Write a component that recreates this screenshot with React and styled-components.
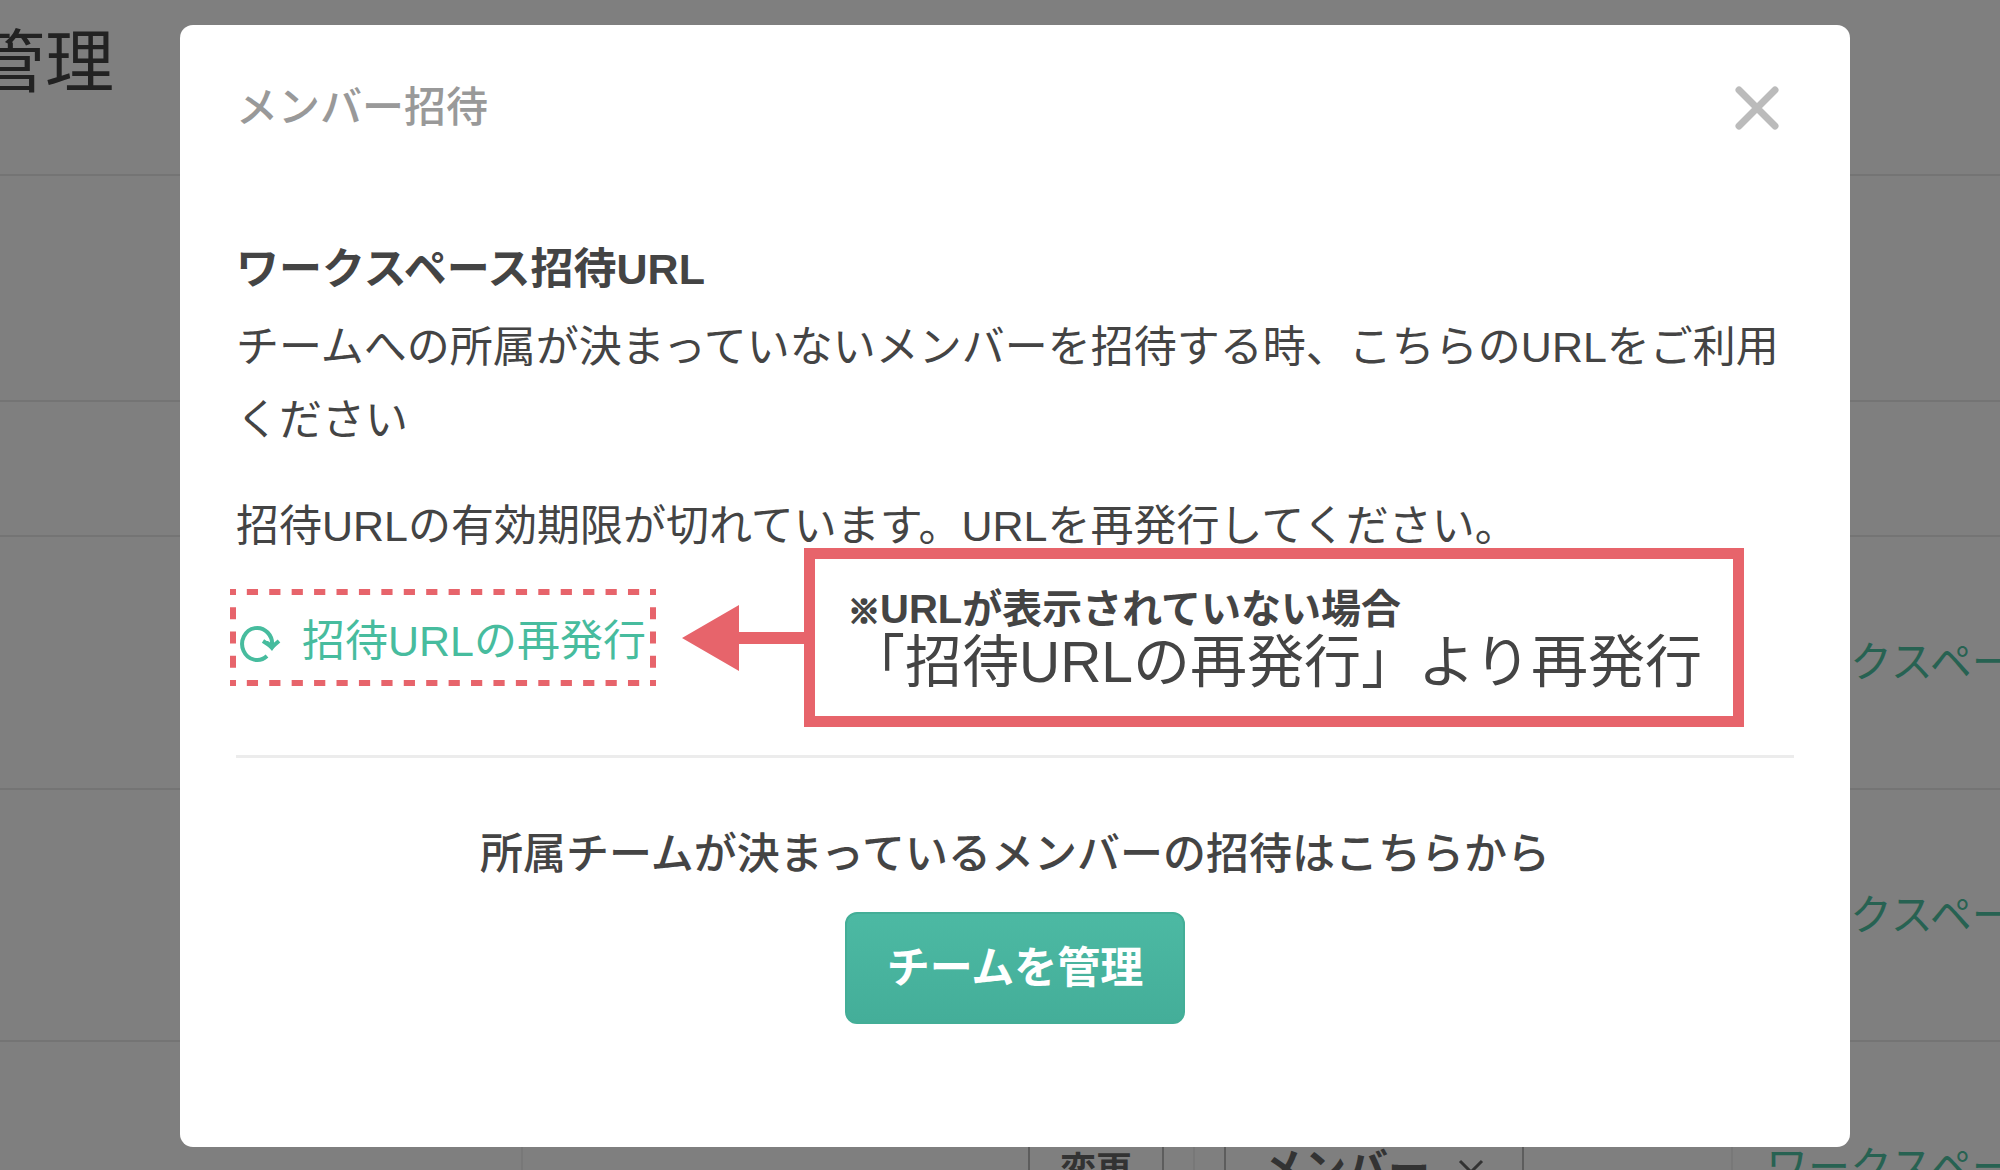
import React from 'react';
import styled, { createGlobalStyle } from 'styled-components';

const GlobalStyle = createGlobalStyle`
  * {
    box-sizing: border-box;
  }
  body {
    margin: 0;
    background: #fff;
    color: #444;
    font-family: "Liberation Sans", "Noto Sans CJK JP", sans-serif;
  }
  button, select {
    font-family: inherit;
  }
`;

const Page = styled.main`
  height: 100vh;
  overflow: hidden;
`;
const PageHeader = styled.header`
  height: 176px;
  padding-top: 16px;
  border-bottom: 2px solid #e8e8e8;
`;
const PageTitle = styled.h1`
  margin: 0 0 0 -24px;
  font-size: 69px;
  font-weight: 400;
  line-height: 96px;
`;
const Section = styled.section`
  height: ${props => props.$tall ? '226px' : '135px'};
  border-bottom: 2px solid #e8e8e8;
`;
const Members = styled.table`
  width: 100%;
  table-layout: fixed;
  border-collapse: collapse;
`;
const Col = styled.col`
  width: ${props => props.$width};
`;
const Cell = styled.td`
  height: 252px;
  padding: 0 29px;
  border-bottom: 2px solid #e8e8e8;
  border-right: 2px solid #f0f0f0;
  text-align: ${props => props.$align || 'left'};
  white-space: nowrap;
  overflow: hidden;
  &:last-child {
    padding-bottom: 8px;
    border-right: none;
  }
`;
const TeamLink = styled.a`
  padding-left: 4px;
  color: #4fc5a5;
  font-size: 42px;
  text-decoration: none;
`;
const ChangeButton = styled.button`
  height: 88px;
  padding: 0 30px;
  border: 2px solid #bbb;
  background: #fff;
  color: #666;
  font-size: 36px;
  font-weight: 700;
`;
const SelectBox = styled.span`
  display: inline-grid;
  align-items: center;
  width: 300px;
  & > * {
    grid-area: 1 / 1;
  }
  & > svg {
    justify-self: end;
    margin-right: 40px;
  }
`;
const RoleSelect = styled.select`
  appearance: none;
  width: 100%;
  height: 88px;
  padding: 4px 36px 0;
  border: 2px solid #bbb;
  border-radius: 0;
  background: #fff;
  color: #666;
  font-size: 42px;
  font-weight: 700;
`;

const Overlay = styled.div`
  position: fixed;
  inset: 0;
  padding: 25px 150px 0 180px;
  background: rgba(0, 0, 0, 0.5);
`;
const Modal = styled.div`
  padding: 46px 56px 123px;
  border-radius: 13px;
  background: #fff;
`;
const ModalHeader = styled.div`
  display: flex;
  align-items: center;
  justify-content: space-between;
  height: 73px;
  margin-bottom: 89px;
  padding-right: 15px;
`;
const ModalTitle = styled.h2`
  margin: 0;
  color: #999;
  font-size: 42px;
  font-weight: 500;
  line-height: 73px;
`;
const CloseButton = styled.button`
  display: flex;
  padding: 0;
  border: none;
  background: none;
`;
const Heading = styled.h3`
  margin: 0 0 ${props => props.$center ? '0' : '5px'};
  font-size: 43px;
  font-weight: ${props => props.$center ? 500 : 700};
  line-height: 73px;
  text-align: ${props => props.$center ? 'center' : 'left'};
`;
const Text = styled.p`
  margin: 0 0 ${props => props.$gap ? '33px' : '0'};
  font-size: 43px;
  line-height: 73px;
`;
const ReissueRow = styled.div`
  display: flex;
  align-items: center;
  margin: -15px 0 28px -6px;
`;
const Highlight = styled.div`
  display: grid;
  flex: none;
  width: 426px;
  height: 97px;
  & > * {
    grid-area: 1 / 1;
  }
`;
const ReissueButton = styled.button`
  display: flex;
  align-items: center;
  gap: 20px;
  padding: 8px 0 0 8px;
  border: none;
  background: none;
  color: #47bc9e;
  font-size: 43px;
  line-height: 73px;
  white-space: nowrap;
`;
const Arrow = styled.svg`
  flex: none;
  margin-left: 26px;
`;
const Callout = styled.div`
  height: 179px;
  width: 940px;
  flex: none;
  padding: 24px 33px;
  border: 11px solid #e7646b;
  background: #fff;
  white-space: nowrap;
`;
const CalloutLead = styled.strong`
  display: block;
  font-size: 40px;
  line-height: 52px;
`;
const Mark = styled.span`
  font-size: 32px;
  -webkit-text-stroke: 2px currentColor;
`;
const CalloutText = styled.span`
  display: block;
  font-size: 57px;
  line-height: 48px;
`;
const Divider = styled.hr`
  height: 3px;
  margin: 0 0 60px;
  border: none;
  background: #ececec;
`;
const TeamButton = styled.button`
  display: block;
  height: 112px;
  margin: 21px auto 0;
  padding: 0 40px 8px;
  border: 2px solid #43ae97;
  border-radius: 12px;
  background: linear-gradient(#4cb9a3, #44ae99);
  color: #fff;
  font-size: 43px;
  font-weight: 700;
`;

const CloseIcon = () => (
  <svg width="44" height="44" viewBox="0 0 44 44" stroke="#bbb" strokeWidth="7" strokeLinecap="round">
    <path d="M4 4L40 40M40 4L4 40" />
  </svg>
);

const ReloadIcon = () => (
  <svg width="44" height="44" viewBox="0 0 44 44" fill="none" stroke="currentColor" strokeWidth="4">
    <path d="M29 36A15 16 0 1 1 34 26" />
    <path d="M25 21L34 27L41 21" />
    <path d="M25 21H30L34 24L41 21L34 31Z" fill="currentColor" stroke="none" />
  </svg>
);

// every side starts and ends on half a dash
const DashedFrame = () => (
  <svg width="426" height="97" fill="none" stroke="#e7646b" strokeWidth="6" strokeDasharray="2 2" strokeDashoffset="1" pointerEvents="none">
    <path d="M0 3H426" pathLength="76" />
    <path d="M0 94H426" pathLength="76" />
    <path d="M3 0V97" pathLength="16" />
    <path d="M423 0V97" pathLength="16" />
  </svg>
);

const rows = [1, 2, 3];

function App() {
  return (
    <>
      <GlobalStyle />
      <Page>
        <PageHeader><PageTitle>管理</PageTitle></PageHeader>
        <Section $tall />
        <Section />
        <Members>
          <colgroup>
            <Col $width="26.1%" />
            <Col $width="33.6%" />
            <Col $width="26.9%" />
            <Col />
          </colgroup>
          <tbody>
            {rows.map(row => (
              <tr key={row}>
                <Cell />
                <Cell $align="right"><ChangeButton>変更</ChangeButton></Cell>
                <Cell>
                  <SelectBox>
                    <RoleSelect aria-label="権限"><option>メンバー</option></RoleSelect>
                    <svg width="26" height="16" viewBox="0 0 26 16" fill="none" stroke="#666" strokeWidth="3"><path d="M2 2L13 13L24 2" /></svg>
                  </SelectBox>
                </Cell>
                <Cell><TeamLink href="#">ワークスペース</TeamLink></Cell>
              </tr>
            ))}
          </tbody>
        </Members>
      </Page>
      <Overlay>
        <Modal role="dialog" aria-labelledby="modal-title">
          <ModalHeader>
            <ModalTitle id="modal-title">メンバー招待</ModalTitle>
            <CloseButton aria-label="閉じる"><CloseIcon /></CloseButton>
          </ModalHeader>
          <Heading>ワークスペース招待URL</Heading>
          <Text $gap>チームへの所属が決まっていないメンバーを招待する時、こちらのURLをご利用ください</Text>
          <Text>招待URLの有効期限が切れています。URLを再発行してください。</Text>
          <ReissueRow>
            <Highlight>
              <ReissueButton><ReloadIcon />招待URLの再発行</ReissueButton>
              <DashedFrame />
            </Highlight>
            <Arrow width="122" height="66" viewBox="0 0 122 66" fill="#e7646b">
              <path d="M0 33L57 0V27H122V39H57V66Z" />
            </Arrow>
            <Callout>
              <CalloutLead><Mark>※</Mark>URLが表示されていない場合</CalloutLead>
              <CalloutText>「招待URLの再発行」より再発行</CalloutText>
            </Callout>
          </ReissueRow>
          <Divider />
          <Heading $center>所属チームが決まっているメンバーの招待はこちらから</Heading>
          <TeamButton>チームを管理</TeamButton>
        </Modal>
      </Overlay>
    </>
  );
}

export default App;
